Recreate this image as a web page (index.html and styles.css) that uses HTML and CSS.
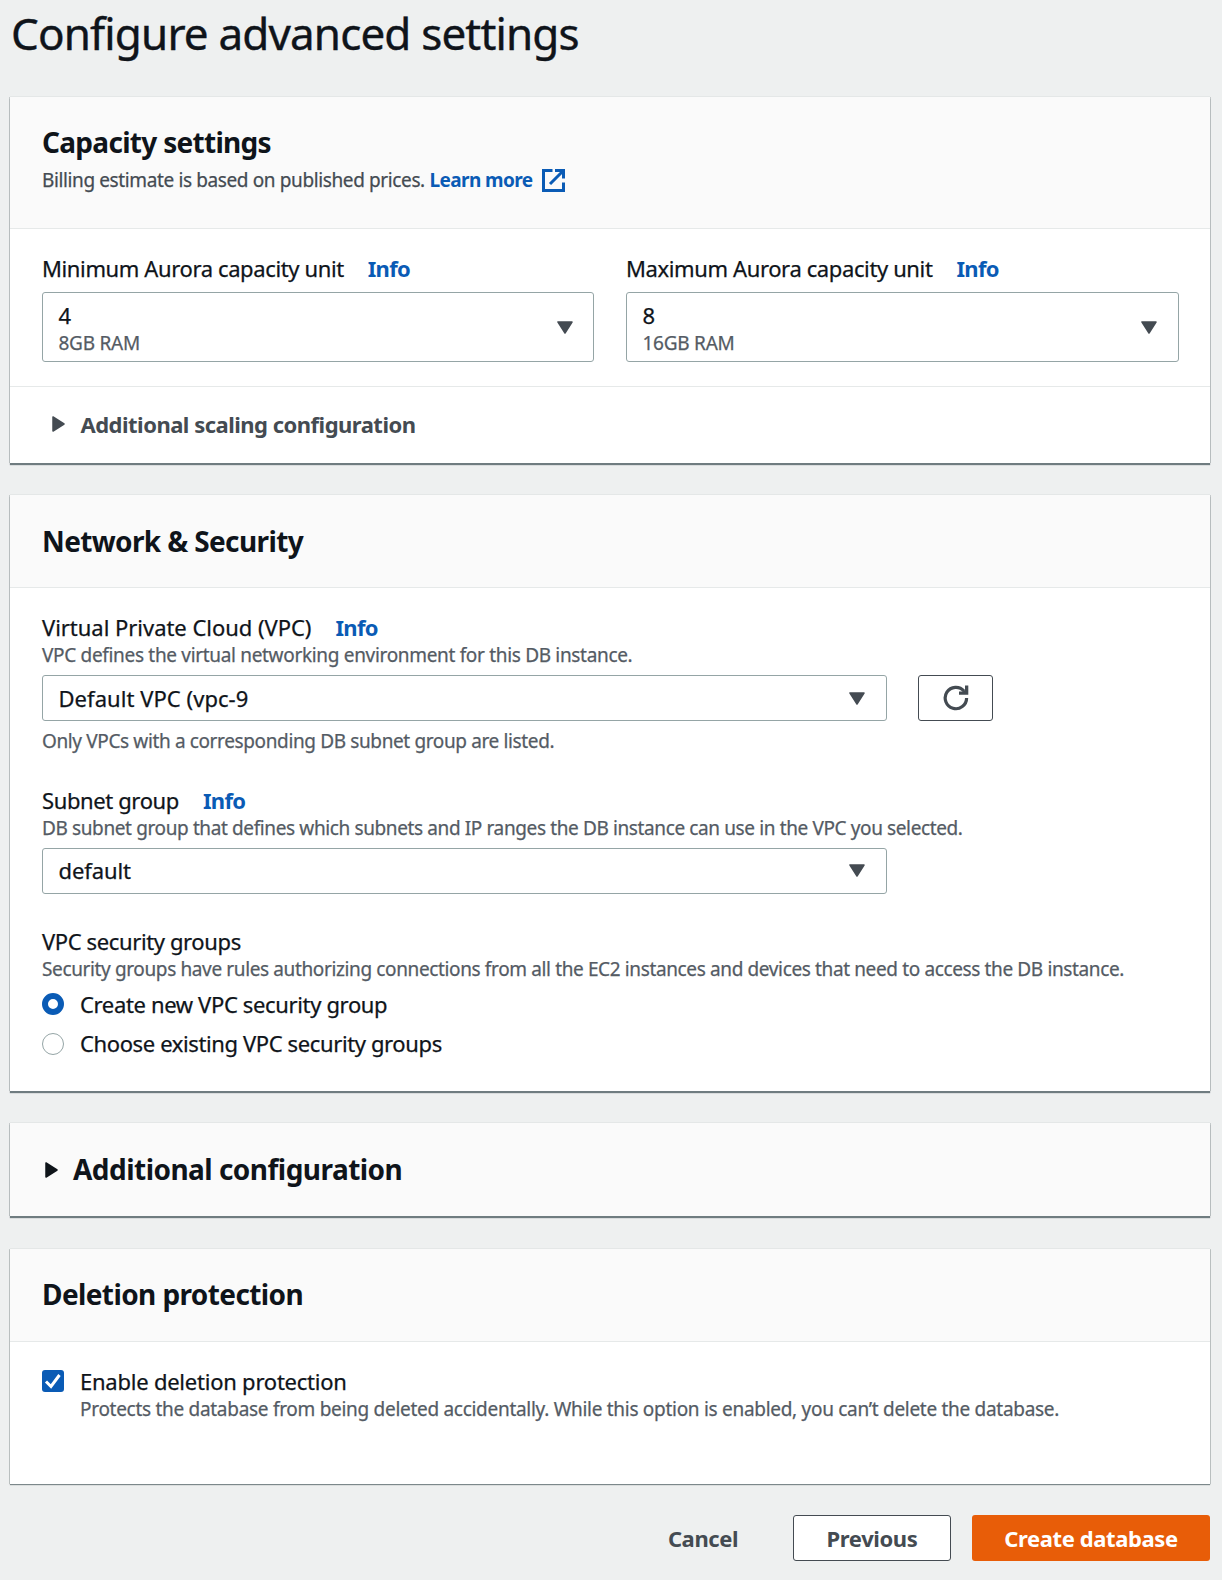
FILE: index.html
```html
<!DOCTYPE html>
<html lang="en">
<head>
<meta charset="utf-8">
<title>Configure advanced settings</title>
<link rel="stylesheet" href="styles.css">
</head>
<body>
<main class="page">
  <h1 class="page-title">Configure advanced settings</h1>

  <section class="panel">
    <header class="panel-header panel-header-tall">
      <h2 class="heading heading-capacity">Capacity settings</h2>
      <p class="billing">Billing estimate is based on published prices. <a class="learn-more">Learn more</a>
        <svg class="icon-external" viewBox="0 0 23 23"><path d="M10.500 1.500h-9v20h20v-8M13 1.500h8.500v8M20.500 2.500L8 15"/></svg>
      </p>
    </header>
    <div class="panel-body capacity">
      <div class="field">
        <div class="label-row"><span class="label">Minimum Aurora capacity unit</span><a class="info">Info</a></div>
        <div class="select select-tall">
          <div><div class="value">4</div><div class="sub">8GB RAM</div></div>
          <svg class="caret" viewBox="0 0 16 13"><path d="M1 1h14L8 12z"/></svg>
        </div>
      </div>
      <div class="field">
        <div class="label-row"><span class="label">Maximum Aurora capacity unit</span><a class="info">Info</a></div>
        <div class="select select-tall select-max">
          <div><div class="value">8</div><div class="sub">16GB RAM</div></div>
          <svg class="caret" viewBox="0 0 16 13"><path d="M1 1h14L8 12z"/></svg>
        </div>
      </div>
    </div>
    <div class="expander">
      <svg class="arrow" viewBox="0 0 13 16"><path d="M1 1v14l11-7z"/></svg>
      <span class="expander-text">Additional scaling configuration</span>
    </div>
  </section>

  <section class="panel">
    <header class="panel-header panel-header-network"><h2 class="heading heading-network">Network &amp; Security</h2></header>
    <div class="panel-body network">
      <div class="label-row"><span class="label label-vpc">Virtual Private Cloud (VPC)</span><a class="info">Info</a></div>
      <p class="desc desc-vpc">VPC defines the virtual networking environment for this DB instance.</p>
      <div class="select-row">
        <div class="select select-wide"><div class="value value-vpc">Default VPC (vpc-9</div>
          <svg class="caret" viewBox="0 0 16 13"><path d="M1 1h14L8 12z"/></svg>
        </div>
        <button class="refresh" aria-label="Refresh">
          <svg class="icon-refresh" viewBox="0 0 26 26"><path class="ring" d="M23.600 13A10.700 10.700 0 1 1 21 6"/><path class="head" d="M25.300 .500v9.300h-9.300v-3.200h3.500L22 5V.500z"/></svg>
        </button>
      </div>
      <p class="note">Only VPCs with a corresponding DB subnet group are listed.</p>

      <div class="label-row group-subnet"><span class="label">Subnet group</span><a class="info">Info</a></div>
      <p class="desc">DB subnet group that defines which subnets and IP ranges the DB instance can use in the VPC you selected.</p>
      <div class="select select-wide select-subnet"><div class="value value-subnet">default</div>
        <svg class="caret" viewBox="0 0 16 13"><path d="M1 1h14L8 12z"/></svg>
      </div>

      <div class="label-row group-security"><span class="label">VPC security groups</span></div>
      <p class="desc desc-security">Security groups have rules authorizing connections from all the EC2 instances and devices that need to access the DB instance.</p>
      <div class="radios">
        <div class="option"><span class="radio radio-on"></span><span class="label label-create">Create new VPC security group</span></div>
        <div class="option"><span class="radio"></span><span class="label">Choose existing VPC security groups</span></div>
      </div>
    </div>
  </section>

  <section class="panel panel-collapsed">
    <svg class="arrow arrow-dark" viewBox="0 0 13 16"><path d="M1 1v14l11-7z"/></svg>
    <h2 class="heading heading-additional">Additional configuration</h2>
  </section>

  <section class="panel panel-last">
    <header class="panel-header"><h2 class="heading">Deletion protection</h2></header>
    <div class="panel-body deletion">
      <div class="option">
        <span class="checkbox"><svg viewBox="0 0 22 22"><path d="M4 11.500l5 5L17.500 5"/></svg></span>
        <div>
          <div class="label label-enable">Enable deletion protection</div>
          <p class="desc desc-flat">Protects the database from being deleted accidentally. While this option is enabled, you can’t delete the database.</p>
        </div>
      </div>
    </div>
  </section>

  <footer class="actions">
    <button class="btn btn-link">Cancel</button>
    <button class="btn btn-normal">Previous</button>
    <button class="btn btn-primary">Create database</button>
  </footer>
</main>
</body>
</html>
```
FILE: styles.css
```css
* { box-sizing: border-box; }

body {
  margin: 0;
  background: #eef0f0;
  color: #0f141a;
  font-family: "Noto Sans", "Open Sans", sans-serif;
  white-space: nowrap;
}

h1, h2, p { margin: 0; }

.page {
  width: 1222px;
  height: 1580px;
  padding: 7px 12px 0 10px;
  overflow: hidden;
}

.page-title {
  margin-bottom: 38px;
  padding-left: 1px;
  font-size: 44px;
  font-weight: 400;
  line-height: 52px;
  letter-spacing: -0.85px;
  -webkit-text-stroke: 0.4px;
}

.panel {
  margin-bottom: 32px;
  background: #fff;
  box-shadow: 0 2px 1px 0 #6f7c80, 1px 0 0 0 #c6cbcb, -1px 0 0 0 #c6cbcb, 0 -1px 0 0 #e4e7e7;
}
.panel-last {
  box-shadow: 0 1px 1px 0 #7c888b, 1px 0 0 0 #c6cbcb, -1px 0 0 0 #c6cbcb, 0 -1px 0 0 #e4e7e7;
}

.panel-header {
  height: 93px;
  padding: 27px 32px 0;
  background: #fafafa;
  border-bottom: 1px solid #e6e9e9;
}
.panel-header-tall { height: 132px; }
.panel-header-network { padding-top: 28px; }

.heading {
  font-size: 28px;
  font-weight: 700;
  line-height: 36px;
  letter-spacing: -0.6px;
}
.heading-capacity { letter-spacing: -0.7px; }
.heading-network { letter-spacing: -0.63px; }
.heading-additional { letter-spacing: -0.53px; }

.billing {
  display: flex;
  align-items: center;
  margin-top: 6px;
  color: #444b52;
  font-size: 19px;
  line-height: 28px;
  letter-spacing: -0.38px;
  white-space: pre;
  -webkit-text-stroke: 0.25px;
}
.learn-more {
  color: #0a5bb5;
  font-weight: 700;
  letter-spacing: -0.58px;
  -webkit-text-stroke: 0;
}
.icon-external {
  width: 23px;
  height: 23px;
  margin-left: 9.5px;
  fill: none;
  stroke: #0a5bb5;
  stroke-width: 3;
}

.panel-body { padding: 26px 32px 0; }
.capacity {
  display: grid;
  grid-template-columns: 552px 553px;
  gap: 32px;
  height: 157px;
}
.network { padding-bottom: 34px; }
.deletion { padding-bottom: 62px; }

.label-row { display: flex; align-items: baseline; gap: 24px; }
.label, .value {
  font-size: 22px;
  line-height: 27px;
  letter-spacing: -0.38px;
  -webkit-text-stroke: 0.25px;
}
.label-vpc { letter-spacing: -0.03px; }
.label-create { letter-spacing: -0.35px; }
.label-enable { letter-spacing: -0.23px; }
.value-vpc { letter-spacing: 0.05px; }
.value-subnet { letter-spacing: -0.1px; }
.info {
  color: #0a5bb5;
  font-size: 22px;
  font-weight: 700;
  line-height: 27px;
  letter-spacing: -0.7px;
}
.desc, .note, .sub {
  padding-top: 1px;
  color: #545b64;
  font-size: 19px;
  line-height: 27px;
  letter-spacing: -0.38px;
  -webkit-text-stroke: 0.25px;
}
.sub { letter-spacing: -0.25px; }
.desc { margin-bottom: 6px; }
.desc-vpc { letter-spacing: -0.32px; }
.desc-security { letter-spacing: -0.37px; }
.desc-flat { margin-bottom: -1px; letter-spacing: -0.29px; }
.note { margin-top: 6px; letter-spacing: -0.37px; }

.select {
  display: flex;
  align-items: center;
  justify-content: space-between;
  height: 46px;
  padding: 1px 21px 0 15.5px;
  background: #fff;
  border: 1px solid #95a5a6;
  border-radius: 3px;
}
.select-tall { height: 70px; margin-top: 10px; padding: 5px 20px 0 15.5px; }
.select-max { padding-right: 21px; }
.select-tall .caret { margin-top: -4px; }
.select-wide { width: 845px; }
.select-subnet { padding-top: 0; padding-bottom: 1px; }
.select-row { display: flex; gap: 31px; }

.caret { width: 16px; height: 13px; }
.caret path, .arrow path {
  fill: #444b52;
  stroke: #444b52;
  stroke-width: 1.5;
  stroke-linejoin: round;
}
.arrow { width: 13px; height: 16px; }
.arrow-dark { margin-top: 2px; }
.arrow-dark path { fill: #0f141a; stroke: #0f141a; }

.expander {
  display: flex;
  align-items: center;
  gap: 15.5px;
  height: 77px;
  padding: 0 0 2px 42px;
  border-top: 1px solid #e6e9e9;
}
.expander-text {
  color: #444b52;
  font-size: 22px;
  font-weight: 700;
  letter-spacing: -0.51px;
}

.refresh {
  display: flex;
  align-items: center;
  justify-content: center;
  width: 75px;
  height: 46px;
  padding: 0;
  background: #fff;
  border: 1px solid #444b52;
  border-radius: 3px;
}
.icon-refresh { width: 26px; height: 26px; }
.icon-refresh .ring { fill: none; stroke: #444b52; stroke-width: 3.2; }
.icon-refresh .head { fill: #444b52; }

.group-subnet { margin-top: 32px; }
.group-security { margin-top: 34px; }

.radios { display: flex; flex-direction: column; gap: 12px; margin-top: 8px; }
.option { display: flex; gap: 16px; }
.radio {
  width: 22px;
  height: 22px;
  margin-top: 2px;
  background: #fff;
  border: 1.5px solid #95a5a6;
  border-radius: 50%;
}
.option + .option .radio { margin-top: 3px; }
.radio-on { border: 6.5px solid #0a5bb5; }
.checkbox {
  width: 22px;
  height: 22px;
  margin-top: 2px;
  background: #0a5bb5;
  border-radius: 3px;
}
.checkbox svg {
  display: block;
  fill: none;
  stroke: #fff;
  stroke-width: 3;
}

.panel-collapsed {
  display: flex;
  align-items: center;
  gap: 15px;
  height: 93px;
  margin-bottom: 33px;
  padding: 0 35px 1px;
  background: #fafafa;
}

.actions { display: flex; justify-content: flex-end; margin-top: -1px; }
.btn {
  height: 46px;
  padding: 0;
  border: 1px solid transparent;
  border-radius: 3px;
  background: none;
  color: #444b52;
  font-family: inherit;
  font-size: 22px;
  font-weight: 700;
  letter-spacing: -0.4px;
}
.btn-link { width: 138px; margin-right: 21px; }
.btn-normal { width: 158px; margin-right: 21px; background: #fff; border-color: #444b52; }
.btn-primary { width: 238px; background: #e85d08; color: #fff; }
```
